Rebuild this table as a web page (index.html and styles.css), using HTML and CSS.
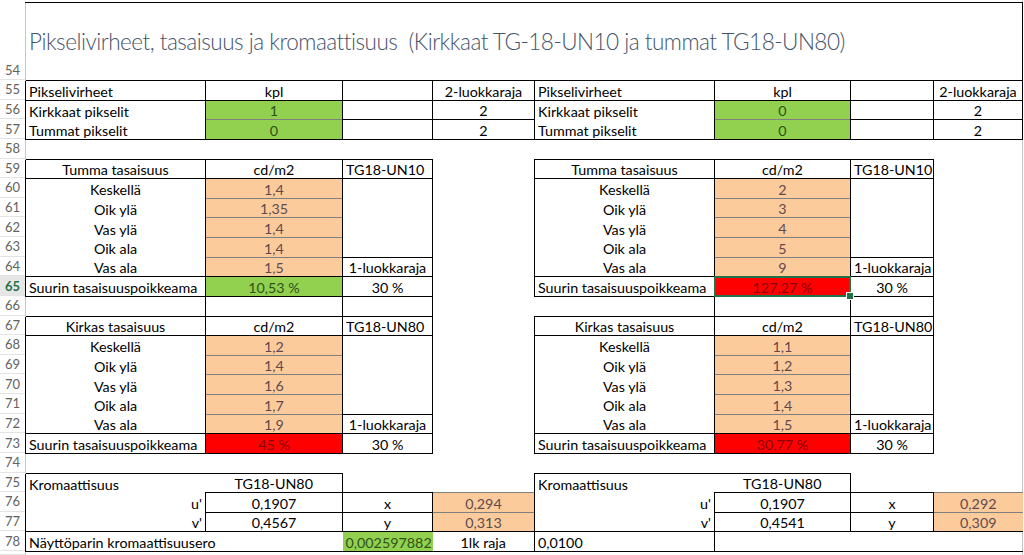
FILE: index.html
```html
<!DOCTYPE html>
<html lang="fi">
<head>
<meta charset="utf-8">
<title>Pikselivirheet, tasaisuus ja kromaattisuus</title>
<link rel="stylesheet" href="styles.css">
</head>
<body>
<div class="sheet">
  <div class="rh">
    <div class="rn first">54</div>
    <div class="rn">55</div>
    <div class="rn">56</div>
    <div class="rn">57</div>
    <div class="rn">58</div>
    <div class="rn">59</div>
    <div class="rn">60</div>
    <div class="rn">61</div>
    <div class="rn">62</div>
    <div class="rn">63</div>
    <div class="rn">64</div>
    <div class="rn cur">65</div>
    <div class="rn">66</div>
    <div class="rn">67</div>
    <div class="rn">68</div>
    <div class="rn">69</div>
    <div class="rn">70</div>
    <div class="rn">71</div>
    <div class="rn">72</div>
    <div class="rn">73</div>
    <div class="rn">74</div>
    <div class="rn">75</div>
    <div class="rn">76</div>
    <div class="rn">77</div>
    <div class="rn">78</div>
    <div class="rn"></div>
  </div>
  <table class="grid">
    <colgroup>
      <col class="cA"><col class="cB"><col class="cC"><col class="cD">
      <col class="cE"><col class="cF"><col class="cG"><col class="cH">
    </colgroup>
    <tbody>
      <tr class="t"><td colspan="8" class="title">Pikselivirheet, tasaisuus ja kromaattisuus&nbsp; (Kirkkaat TG-18-UN10 ja tummat TG18-UN80)</td></tr>

      <tr><td class="B">Pikselivirheet</td><td class="B c">kpl</td><td class="B"></td><td class="B c">2-luokkaraja</td><td class="B">Pikselivirheet</td><td class="B c">kpl</td><td class="B"></td><td class="B c">2-luokkaraja</td></tr>
      <tr><td class="bl br">Kirkkaat pikselit</td><td class="ok c bl br">1</td><td class="B"></td><td class="B c">2</td><td class="bl br">Kirkkaat pikselit</td><td class="ok c bl br">0</td><td class="B"></td><td class="B c">2</td></tr>
      <tr><td class="bl br bb">Tummat pikselit</td><td class="ok c gt bl br bb">0</td><td class="B"></td><td class="B c">2</td><td class="bl br bb">Tummat pikselit</td><td class="ok c gt bl br bb">0</td><td class="B"></td><td class="B c">2</td></tr>
      <tr><td></td><td></td><td></td><td></td><td></td><td></td><td></td><td></td></tr>

      <tr><td class="B c">Tumma tasaisuus</td><td class="B c">cd/m2</td><td class="B">TG18-UN10</td><td></td><td class="B c">Tumma tasaisuus</td><td class="B c">cd/m2</td><td class="B">TG18-UN10</td><td></td></tr>
      <tr><td class="bl br c">Keskellä</td><td class="in c bl br">1,4</td><td class="br"></td><td></td><td class="bl br c">Keskellä</td><td class="in c bl br">2</td><td class="br"></td><td></td></tr>
      <tr><td class="bl br c">Oik ylä</td><td class="in c gt bl br">1,35</td><td class="br"></td><td></td><td class="bl br c">Oik ylä</td><td class="in c gt bl br">3</td><td class="br"></td><td></td></tr>
      <tr><td class="bl br c">Vas ylä</td><td class="in c gt bl br">1,4</td><td class="br"></td><td></td><td class="bl br c">Vas ylä</td><td class="in c gt bl br">4</td><td class="br"></td><td></td></tr>
      <tr><td class="bl br c">Oik ala</td><td class="in c gt bl br">1,4</td><td class="br"></td><td></td><td class="bl br c">Oik ala</td><td class="in c gt bl br">5</td><td class="br"></td><td></td></tr>
      <tr><td class="bl br c">Vas ala</td><td class="in c gt bl br">1,5</td><td class="B c">1-luokkaraja</td><td></td><td class="bl br c">Vas ala</td><td class="in c gt bl br">9</td><td class="B c">1-luokkaraja</td><td></td></tr>
      <tr><td class="B">Suurin tasaisuuspoikkeama</td><td class="B ok c">10,53 %</td><td class="B c">30 %</td><td></td><td class="B">Suurin tasaisuuspoikkeama</td><td class="B bad c act">127,27 %</td><td class="B c">30 %</td><td></td></tr>
      <tr><td></td><td class="bl br"></td><td class="br"></td><td></td><td></td><td class="bl br"></td><td class="br"></td><td></td></tr>

      <tr><td class="B c">Kirkas tasaisuus</td><td class="B c">cd/m2</td><td class="B">TG18-UN80</td><td></td><td class="B c">Kirkas tasaisuus</td><td class="B c">cd/m2</td><td class="B">TG18-UN80</td><td></td></tr>
      <tr><td class="bl br c">Keskellä</td><td class="in c bl br">1,2</td><td class="br"></td><td></td><td class="bl br c">Keskellä</td><td class="in c bl br">1,1</td><td class="br"></td><td></td></tr>
      <tr><td class="bl br c">Oik ylä</td><td class="in c gt bl br">1,4</td><td class="br"></td><td></td><td class="bl br c">Oik ylä</td><td class="in c gt bl br">1,2</td><td class="br"></td><td></td></tr>
      <tr><td class="bl br c">Vas ylä</td><td class="in c gt bl br">1,6</td><td class="br"></td><td></td><td class="bl br c">Vas ylä</td><td class="in c gt bl br">1,3</td><td class="br"></td><td></td></tr>
      <tr><td class="bl br c">Oik ala</td><td class="in c gt bl br">1,7</td><td class="br"></td><td></td><td class="bl br c">Oik ala</td><td class="in c gt bl br">1,4</td><td class="br"></td><td></td></tr>
      <tr><td class="bl br c">Vas ala</td><td class="in c gt bl br">1,9</td><td class="B c">1-luokkaraja</td><td></td><td class="bl br c">Vas ala</td><td class="in c gt bl br">1,5</td><td class="B c">1-luokkaraja</td><td></td></tr>
      <tr><td class="B">Suurin tasaisuuspoikkeama</td><td class="B bad c">45 %</td><td class="B c">30 %</td><td></td><td class="B">Suurin tasaisuuspoikkeama</td><td class="B bad c">30,77 %</td><td class="B c">30 %</td><td></td></tr>
      <tr><td></td><td></td><td></td><td></td><td></td><td></td><td></td><td></td></tr>

      <tr><td class="bt bl">Kromaattisuus</td><td class="bt br c">TG18-UN80</td><td></td><td></td><td class="bt bl">Kromaattisuus</td><td class="bt br c">TG18-UN80</td><td></td><td></td></tr>
      <tr><td class="bl r">u'</td><td class="B c">0,1907</td><td class="B c">x</td><td class="in c gt">0,294</td><td class="bl r">u'</td><td class="B c">0,1907</td><td class="B c">x</td><td class="in c gt">0,292</td></tr>
      <tr><td class="bl bb r">v'</td><td class="B c">0,4567</td><td class="B c">y</td><td class="in c gt bb">0,313</td><td class="bl bb r">v'</td><td class="B c">0,4541</td><td class="B c">y</td><td class="in c gt bb">0,309</td></tr>
      <tr><td class="bl bb">Näyttöparin kromaattisuusero</td><td class="bb"></td><td class="ok r bb">0,002597882</td><td class="bb c">1lk raja</td><td class="B">0,0100</td><td class="bb"></td><td class="bb"></td><td class="bb"></td></tr>
      <tr class="tail"><td></td><td></td><td></td><td></td><td></td><td></td><td></td><td></td></tr>
    </tbody>
  </table>
</div>
</body>
</html>
```
FILE: styles.css
```css
* { box-sizing: border-box; }
html, body { margin: 0; padding: 0; background: #fff; }
body {
  width: 1024px;
  height: 555px;
  overflow: hidden;
  font-family: Lato, "Liberation Sans", sans-serif;
  font-size: 14.3px;
  color: #000;
}
.sheet {
  display: flex;
  width: 1023px;
  height: 555px;
  border-right: 1px solid #c6c6c6;
}
.rh {
  flex: none;
  width: 25px;
  display: grid;
  grid-template-rows: 80px repeat(24, 19.625px) 1fr;
  background: #fff;
}
.rn {
  display: flex;
  align-items: center;
  justify-content: center;
  border-bottom: 1px solid #e3e3e3;
  font-size: 13px;
  color: #626262;
}
.rn.first { align-items: flex-end; padding-bottom: 1px; }
.rn.cur { color: #217346; font-weight: 700; background: #e6e6e6; }

.grid {
  border-collapse: collapse;
  table-layout: fixed;
  width: 997px;
  margin-top: 2px;
}
.cA { width: 180px; }
.cB { width: 137px; }
.cC { width: 90px; }
.cD { width: 102px; }
.cE { width: 180px; }
.cF { width: 136px; }
.cG { width: 83px; }
.cH { width: 89px; }

.grid tr { height: 19.625px; }
.grid tr.t { height: 78px; }
.grid tr.tail { height: 4px; }

.grid td {
  padding: 0 3px;
  vertical-align: bottom;
  line-height: 16px;
  white-space: nowrap;
  overflow: visible;
}
:where(.grid td:first-child) { border-left: 1px solid #c6c6c6; }

.title {
  vertical-align: top !important;
  padding: 25px 0 0 3px !important;
  font-size: 22.5px;
  font-weight: 300;
  letter-spacing: -0.5px;
  line-height: 28px !important;
  color: #44546a;
  border-top: 1px solid #000;
  border-right: 1px solid #000;
}

.c { text-align: center; }
.r { text-align: right; }

.B { border: 1px solid #000; }
.bt { border-top: 1px solid #000; }
.bb { border-bottom: 1px solid #000; }
.bl { border-left: 1px solid #000; }
.br { border-right: 1px solid #000; }
.gt { border-top: 1px solid #7f7f7f; }

.in { background: #fccb9c; color: #5e4a4e; }
.ok { background: #92d050; color: #2f5218; }
.bad { background: #ff0000; color: #8a0006; }

.act { position: relative; }
.act::after {
  content: "";
  position: absolute;
  inset: -1px;
  border: 2px solid #217346;
}
.act::before {
  content: "";
  position: absolute;
  right: -4px;
  bottom: -4px;
  width: 6px;
  height: 6px;
  background: #217346;
  border: 1px solid #fff;
  z-index: 1;
}
```
